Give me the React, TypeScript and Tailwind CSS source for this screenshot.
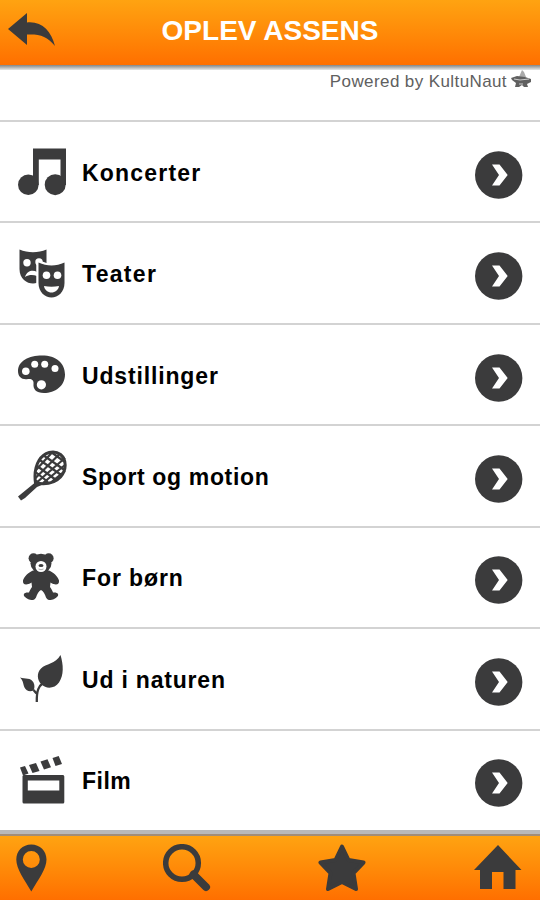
import type { ReactNode } from "react";

function MusicIcon() {
  return (
    <>
      <path d="M17 2.5H50V39H44.5V13.5H22.8V39H17Z" />
      <circle cx="12.3" cy="38.7" r="10.3" />
      <circle cx="39.2" cy="38.7" r="10.5" />
    </>
  );
}

function MasksIcon() {
  return (
    <>
      <path d="M3.500 2.5C12 6 22 6 30.500 2.5V22C30 31 23 36.5 17 36.5S3.500 32 3.500 22Z" />
      <circle cx="11" cy="15.7" r="3.7" fill="#fff" />
      <circle cx="23" cy="15" r="3.7" fill="#fff" />
      <path d="M9 30C11 23.5 17 22.5 21 25V29C17 27.500 13 27.500 9 30Z" fill="#fff" />
      <path
        d="M22.5 15.5C31 19.5 40 19.5 48.5 15.5V36C48.5 45 42 50.5 35.5 50.5S22.5 45 22.5 36Z"
        stroke="#fff"
        strokeWidth="4.500"
        strokeLinejoin="round"
        paintOrder="stroke"
      />
      <circle cx="30.5" cy="28.3" r="3.8" fill="#fff" />
      <circle cx="41.5" cy="28.3" r="3.8" fill="#fff" />
      <path d="M28 39C33 40 38 40 43 39C42.500 43 39 45.5 35.5 45.5S28.500 43 28 39Z" fill="#fff" />
    </>
  );
}

function PaletteIcon() {
  return (
    <>
      <path d="M2 22C2 12 13 6.5 26 6.5C40 6.5 49 14 49 25.5C49 37 39 44 28 44C20 44 17 40 17.5 35C18 31 15.500 29.500 12 30C6 31 2 28 2 22Z" />
      <circle cx="9.8" cy="22.2" r="3.8" fill="#fff" />
      <circle cx="18.7" cy="15.3" r="3.5" fill="#fff" />
      <circle cx="28.7" cy="15.2" r="3.5" fill="#fff" />
      <circle cx="39" cy="19.6" r="3.5" fill="#fff" />
      <circle cx="25.4" cy="35.8" r="4.6" fill="#fff" />
    </>
  );
}

function RacketIcon() {
  return (
    <>
      <path
        d="M19.500 33C18.500 26 18.500 18 23 10.500C28 2 38 -.5 44.500 4.500C51 10 50.500 20 44.500 27C38 34 28 34.500 19.500 33Z"
        fill="none"
        stroke="#3b3b3c"
        strokeWidth="3"
      />
      <path
        d="M27 5L48.500 20M23 9.500L46 25.500M20.500 15.500L40 30M19.500 22L32 32M35 2L49 12M19 28.500L44 3.500M19 34L49 8M27 33L49 15M20 20L36 2.500M36 31.500L49 21"
        fill="none"
        stroke="#3b3b3c"
        strokeWidth="2.200"
      />
      <path d="M18 29L18.500 33L2 46.500L5 50.500L9 48L21 37L27 34.500L21.500 30.500Z" />
    </>
  );
}

function BearIcon() {
  return (
    <>
      <circle cx="17.500" cy="7.200" r="4.900" />
      <circle cx="32.700" cy="7.200" r="4.900" />
      <ellipse cx="25" cy="12.500" rx="10.500" ry="9.700" />
      <path d="M17 19.500H33C37 21 42 25.500 43 29.500C43.500 33.500 40 35 34.500 31.500L34 36C35.500 38 36.500 40 37 41.500C42 41 43.500 43.500 41 46C37 50 31.500 50 30 46.500C29 43 27 40 25 39C23 40 21 43 20 46.500C18.500 50 13 50 9 46C6.500 43.500 8 41 13 41.500C13.500 40 14.500 38 16 36L15.500 31.500C10 35 6.500 33.500 7 29.500C8 25.500 13 21 17 19.500Z" />
      <circle cx="25" cy="15.500" r="5.500" fill="#fff" />
      <ellipse cx="25" cy="14.600" rx="2.500" ry="1.500" />
      <path d="M22.500 18Q25 19.500 27.500 18" fill="none" stroke="#999" strokeWidth=".8" />
    </>
  );
}

function LeafIcon() {
  return (
    <>
      <path d="M44.500 2C47.500 12 48 22 43 29.500C38.500 36 30 36 25.500 31.500C21 27 20.500 20 25 15.500C30 10.500 39.500 11 44.500 2Z" />
      <path d="M4 24.500C9 26 15 24.500 17.500 29.500C19 32.500 18.500 36 17.500 37.500C14 39 10 38 8.500 34.500C7 31 7.500 28 4 24.500Z" />
      <path d="M27 30C23 33 20.500 37 20.800 49M17.500 37L20.500 40.500" fill="none" stroke="#3b3b3c" strokeWidth="2.300" />
    </>
  );
}

function ClapperIcon() {
  return (
    <>
      <path d="M4 13.500L9 12L12.500 19.500L7 21.500Z" />
      <path d="M13 11L20 9L23.500 17L16.500 19Z" />
      <path d="M24.500 7.500L31.500 5.300L35 13.300L28 15.500Z" />
      <path d="M36.500 4L42.700 2L46 10L39.500 12Z" />
      <path
        d="M7.500 21H47Q48.300 21 48.300 22.500V48Q48.300 49.500 47 49.500H8Q6.500 49.500 6.500 48V22ZM11.800 26.500V36.500H43.300V26.500Z"
        fillRule="evenodd"
      />
    </>
  );
}

const categories: { label: string; icon: ReactNode; tracking: string }[] = [
  { label: "Koncerter", icon: <MusicIcon />, tracking: "tracking-[1.2px]" },
  { label: "Teater", icon: <MasksIcon />, tracking: "tracking-[1.3px]" },
  { label: "Udstillinger", icon: <PaletteIcon />, tracking: "tracking-[0.85px]" },
  { label: "Sport og motion", icon: <RacketIcon />, tracking: "tracking-[0.65px]" },
  { label: "For børn", icon: <BearIcon />, tracking: "tracking-[0.9px]" },
  { label: "Ud i naturen", icon: <LeafIcon />, tracking: "tracking-[0.8px]" },
  { label: "Film", icon: <ClapperIcon />, tracking: "tracking-[0.5px]" }
];

function CategoryRow({ icon, label, tracking }: { icon: ReactNode; label: string; tracking: string }) {
  return (
    <button
      className="flex min-h-0 w-full flex-1 items-center border-t-2 border-[#d3d3d3] bg-white pr-[17px] pl-4 text-left"
      type="button"
    >
      <svg className="size-[52px] shrink-0" viewBox="0 0 52 52" fill="#3b3b3c" aria-hidden="true">
        {icon}
      </svg>
      <span className={`mt-[2px] ml-[14px] flex-1 text-[23px] leading-7 font-bold text-black ${tracking}`}>{label}</span>
      <svg className="mt-[6px] size-12 shrink-0" viewBox="0 0 48 48" aria-hidden="true">
        <circle cx="23.700" cy="24" r="23.700" fill="#3b3b3c" />
        <path d="M17 13.500H24.500L32.700 24L24.500 34.500H17L24 24Z" fill="#fff" />
      </svg>
    </button>
  );
}

export default function App() {
  return (
    <div className="flex h-[900px] w-[540px] flex-col overflow-hidden bg-white font-['Liberation_Sans',Arial,sans-serif]">
      <header className="grid h-[65px] shrink-0 grid-cols-[80px_1fr_80px] items-center bg-linear-to-b from-[#ffa311] to-[#ff6f00] pb-[3px]">
        <button className="pl-2" type="button" aria-label="Tilbage">
          <svg className="h-9 w-12" viewBox="0 0 48 36" fill="#3b3b3c">
            <path d="M0 16L19 0V9.500C34 8 43 18 47 33C39 23 32 21 19 21.500V32Z" />
          </svg>
        </button>
        <h1 className="text-center text-[28px] leading-8 font-bold whitespace-nowrap text-white">OPLEV ASSENS</h1>
      </header>
      <div className="h-[5px] shrink-0 bg-linear-to-b from-[#858585] to-[#e8e8e8]" />
      <div className="flex h-[50px] shrink-0 items-start justify-end gap-[4px] pr-[9px] text-[#606060]">
        <span className="pt-px text-[17px] leading-[22px] tracking-[0.4px]">Powered by KultuNaut</span>
        <svg className="h-[19px] w-5" viewBox="0 0 20 19" aria-hidden="true">
          <path d="M8 7L11 0L13 2L15 7Z" fill="#aaa" />
          <path d="M0 8L6 6L14 7L20 9V12L16 14L17 17H13L11 15L8 17H4L5 13L1 10Z" fill="#606060" />
          <path d="M3 9L9 10L18 9M8 14H12" fill="none" stroke="#ccc" />
        </svg>
      </div>
      <main className="flex min-h-0 flex-1 flex-col">
        {categories.map((category) => (
          <CategoryRow key={category.label} {...category} />
        ))}
      </main>
      <div className="h-[6px] shrink-0 border-b-2 border-[#a18d78] bg-[#b9b9b9]" />
      <footer className="flex h-16 shrink-0 items-center bg-linear-to-b from-[#ffa311] to-[#ff6f00] pr-[18px] pl-4">
        <button type="button" aria-label="Kort">
          <svg className="h-12 w-8" viewBox="0 0 32 48" fill="#3b3b3c">
            <path
              d="M15.300 .500C6.500 .500 .300 7 .300 15.500C.300 25 8 35 15.300 47.500C22.500 35 30.500 25 30.500 15.500C30.500 7 24 .500 15.300 .500ZM15.300 7A8.500 8.500 0 1 1 15.300 24A8.500 8.500 0 1 1 15.300 7Z"
              fillRule="evenodd"
            />
          </svg>
        </button>
        <button className="ml-[115px]" type="button" aria-label="Søg">
          <svg className="size-12" viewBox="0 0 48 48" fill="none" stroke="#3b3b3c">
            <circle cx="19" cy="19" r="16.300" strokeWidth="5.500" />
            <path d="M30.500 30.500L43 43" strokeWidth="8" strokeLinecap="round" />
          </svg>
        </button>
        <button className="ml-[107px]" type="button" aria-label="Favoritter">
          <svg className="size-12" viewBox="0 0 48 48" fill="#3b3b3c" stroke="#3b3b3c" strokeWidth="4" strokeLinejoin="round">
            <path d="M24 2.500L30.500 16L45.500 18.500L35.500 29L38 45L24 38L10 45L12.500 29L2.500 18.500L17.500 16Z" />
          </svg>
        </button>
        <button className="ml-auto" type="button" aria-label="Hjem">
          <svg className="size-12" viewBox="0 0 48 48" fill="#3b3b3c">
            <path d="M24 1L47.500 26H41.500V45H29.500V28H18V45H6V26H0Z" />
          </svg>
        </button>
      </footer>
    </div>
  );
}
